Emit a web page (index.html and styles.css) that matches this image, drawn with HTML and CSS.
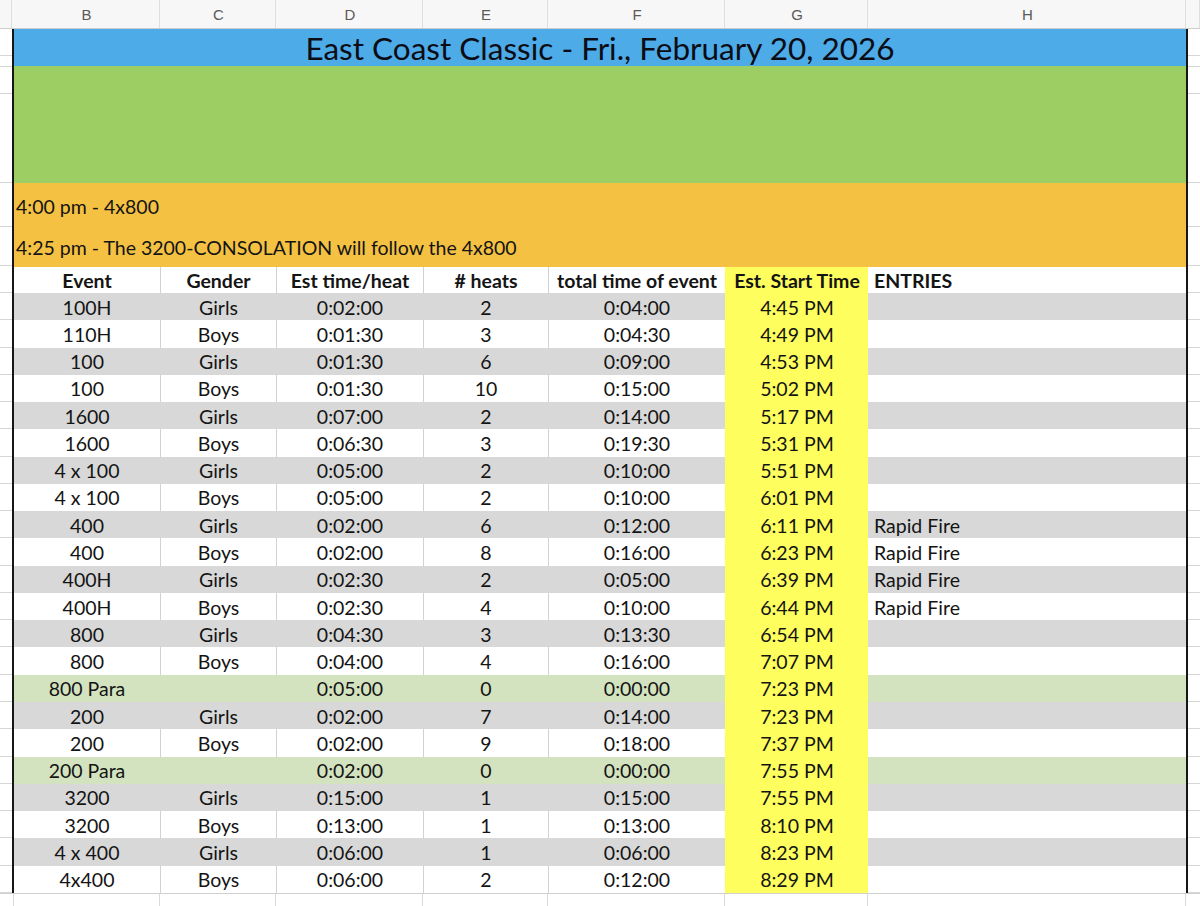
FILE: index.html
```html
<!DOCTYPE html>
<html>
<head>
<meta charset="utf-8">
<title>East Coast Classic</title>
<link rel="stylesheet" href="styles.css">
</head>
<body>
<div class="colheads">
  <div class="ch"></div>
  <div class="ch">B</div>
  <div class="ch">C</div>
  <div class="ch">D</div>
  <div class="ch">E</div>
  <div class="ch">F</div>
  <div class="ch">G</div>
  <div class="ch">H</div>
  <div class="ch"></div>
</div>
<div class="frame">
  <div class="gutter">
    <div class="h27"></div><div class="h11"></div><div class="h27"></div><div class="h89"></div>
    <div class="h44"></div><div class="h39"></div><div class="h27"></div>
    <div class="hr"></div><div class="hr"></div><div class="hr"></div><div class="hr"></div>
    <div class="hr"></div><div class="hr"></div><div class="hr"></div><div class="hr"></div>
    <div class="hr"></div><div class="hr"></div><div class="hr"></div><div class="hr"></div>
    <div class="hr"></div><div class="hr"></div><div class="hr"></div><div class="hr"></div>
    <div class="hr"></div><div class="hr"></div><div class="hr"></div><div class="hr"></div>
    <div class="hr"></div><div class="hr"></div>
  </div>
  <div class="sheet">
    <div class="title">East Coast Classic - Fri., February 20, 2026</div>
    <div class="banner"></div>
    <div class="notes">
      <div class="note n1">4:00 pm - 4x800</div>
      <div class="note n2">4:25 pm - The 3200-CONSOLATION will follow the 4x800</div>
    </div>
    <div class="row head">
      <div class="c">Event</div><div class="c">Gender</div><div class="c">Est time/heat</div><div class="c"># heats</div><div class="c">total time of event</div><div class="c y">Est. Start Time</div><div class="c l">ENTRIES</div>
    </div>
    <div class="row gray"><div class="c">100H</div><div class="c">Girls</div><div class="c">0:02:00</div><div class="c">2</div><div class="c">0:04:00</div><div class="c y">4:45 PM</div><div class="c l"></div></div>
    <div class="row"><div class="c">110H</div><div class="c">Boys</div><div class="c">0:01:30</div><div class="c">3</div><div class="c">0:04:30</div><div class="c y">4:49 PM</div><div class="c l"></div></div>
    <div class="row gray"><div class="c">100</div><div class="c">Girls</div><div class="c">0:01:30</div><div class="c">6</div><div class="c">0:09:00</div><div class="c y">4:53 PM</div><div class="c l"></div></div>
    <div class="row"><div class="c">100</div><div class="c">Boys</div><div class="c">0:01:30</div><div class="c">10</div><div class="c">0:15:00</div><div class="c y">5:02 PM</div><div class="c l"></div></div>
    <div class="row gray"><div class="c">1600</div><div class="c">Girls</div><div class="c">0:07:00</div><div class="c">2</div><div class="c">0:14:00</div><div class="c y">5:17 PM</div><div class="c l"></div></div>
    <div class="row"><div class="c">1600</div><div class="c">Boys</div><div class="c">0:06:30</div><div class="c">3</div><div class="c">0:19:30</div><div class="c y">5:31 PM</div><div class="c l"></div></div>
    <div class="row gray"><div class="c">4 x 100</div><div class="c">Girls</div><div class="c">0:05:00</div><div class="c">2</div><div class="c">0:10:00</div><div class="c y">5:51 PM</div><div class="c l"></div></div>
    <div class="row"><div class="c">4 x 100</div><div class="c">Boys</div><div class="c">0:05:00</div><div class="c">2</div><div class="c">0:10:00</div><div class="c y">6:01 PM</div><div class="c l"></div></div>
    <div class="row gray"><div class="c">400</div><div class="c">Girls</div><div class="c">0:02:00</div><div class="c">6</div><div class="c">0:12:00</div><div class="c y">6:11 PM</div><div class="c l">Rapid Fire</div></div>
    <div class="row"><div class="c">400</div><div class="c">Boys</div><div class="c">0:02:00</div><div class="c">8</div><div class="c">0:16:00</div><div class="c y">6:23 PM</div><div class="c l">Rapid Fire</div></div>
    <div class="row gray"><div class="c">400H</div><div class="c">Girls</div><div class="c">0:02:30</div><div class="c">2</div><div class="c">0:05:00</div><div class="c y">6:39 PM</div><div class="c l">Rapid Fire</div></div>
    <div class="row"><div class="c">400H</div><div class="c">Boys</div><div class="c">0:02:30</div><div class="c">4</div><div class="c">0:10:00</div><div class="c y">6:44 PM</div><div class="c l">Rapid Fire</div></div>
    <div class="row gray"><div class="c">800</div><div class="c">Girls</div><div class="c">0:04:30</div><div class="c">3</div><div class="c">0:13:30</div><div class="c y">6:54 PM</div><div class="c l"></div></div>
    <div class="row"><div class="c">800</div><div class="c">Boys</div><div class="c">0:04:00</div><div class="c">4</div><div class="c">0:16:00</div><div class="c y">7:07 PM</div><div class="c l"></div></div>
    <div class="row para"><div class="c">800 Para</div><div class="c"></div><div class="c">0:05:00</div><div class="c">0</div><div class="c">0:00:00</div><div class="c y">7:23 PM</div><div class="c l"></div></div>
    <div class="row gray"><div class="c">200</div><div class="c">Girls</div><div class="c">0:02:00</div><div class="c">7</div><div class="c">0:14:00</div><div class="c y">7:23 PM</div><div class="c l"></div></div>
    <div class="row"><div class="c">200</div><div class="c">Boys</div><div class="c">0:02:00</div><div class="c">9</div><div class="c">0:18:00</div><div class="c y">7:37 PM</div><div class="c l"></div></div>
    <div class="row para"><div class="c">200 Para</div><div class="c"></div><div class="c">0:02:00</div><div class="c">0</div><div class="c">0:00:00</div><div class="c y">7:55 PM</div><div class="c l"></div></div>
    <div class="row gray"><div class="c">3200</div><div class="c">Girls</div><div class="c">0:15:00</div><div class="c">1</div><div class="c">0:15:00</div><div class="c y">7:55 PM</div><div class="c l"></div></div>
    <div class="row"><div class="c">3200</div><div class="c">Boys</div><div class="c">0:13:00</div><div class="c">1</div><div class="c">0:13:00</div><div class="c y">8:10 PM</div><div class="c l"></div></div>
    <div class="row gray"><div class="c">4 x 400</div><div class="c">Girls</div><div class="c">0:06:00</div><div class="c">1</div><div class="c">0:06:00</div><div class="c y">8:23 PM</div><div class="c l"></div></div>
    <div class="row"><div class="c">4x400</div><div class="c">Boys</div><div class="c">0:06:00</div><div class="c">2</div><div class="c">0:12:00</div><div class="c y">8:29 PM</div><div class="c l"></div></div>
  </div>
  <div class="gutter right">
    <div class="h27"></div><div class="h11"></div><div class="h27"></div><div class="h89"></div>
    <div class="h44"></div><div class="h39"></div><div class="h27"></div>
    <div class="hr"></div><div class="hr"></div><div class="hr"></div><div class="hr"></div>
    <div class="hr"></div><div class="hr"></div><div class="hr"></div><div class="hr"></div>
    <div class="hr"></div><div class="hr"></div><div class="hr"></div><div class="hr"></div>
    <div class="hr"></div><div class="hr"></div><div class="hr"></div><div class="hr"></div>
    <div class="hr"></div><div class="hr"></div><div class="hr"></div><div class="hr"></div>
    <div class="hr"></div><div class="hr"></div>
  </div>
</div>
<div class="tail">
  <div></div><div></div><div></div><div></div><div></div><div></div><div></div><div></div><div></div>
</div>
</body>
</html>
```
FILE: styles.css
```css
* { box-sizing: border-box; }
html, body { margin: 0; padding: 0; }
body {
  width: 1200px;
  height: 906px;
  overflow: hidden;
  background: #fff;
  font-family: Lato, "Open Sans", sans-serif;
  color: #141414;
}

.colheads {
  display: grid;
  grid-template-columns: 12px 148px 116px 147px 125px 177px 143px 318px 1fr;
  height: 29px;
  background: #f7f7f7;
  border-bottom: 1px solid #cdcdcd;
}
.ch {
  display: flex;
  align-items: center;
  justify-content: center;
  border-right: 1px solid #dedede;
  font-family: "Liberation Sans", Arial, sans-serif;
  font-size: 15px;
  color: #5a5a5a;
  padding-top: 1px;
  padding-left: 2px;
}

.frame {
  display: flex;
  height: 864px;
}
.gutter {
  width: 12px;
  display: flex;
  flex-direction: column;
  background: #fff;
}
.gutter.right { flex: 1; }
.gutter > div { border-bottom: 1px solid #d6d6d6; flex: none; }
.h27 { height: 27px; }
.h11 { height: 11px; }
.h89 { height: 89px; }
.h44 { height: 44px; }
.h39 { height: 39px; }
.hr { height: 27.27px; }

.sheet {
  width: 1176px;
  border-left: 2px solid #161616;
  border-right: 2px solid #161616;
  display: flex;
  flex-direction: column;
}
.title {
  height: 37px;
  background: #4dabe8;
  text-align: center;
  font-size: 31.5px;
  line-height: 38px;
  color: #0c0c14;
  white-space: nowrap;
}
.banner {
  height: 117px;
  background: #9dce64;
}
.notes {
  height: 84px;
  background: #f5c143;
  display: flex;
  flex-direction: column;
}
.note {
  display: flex;
  align-items: center;
  padding-left: 2px;
  font-size: 19.5px;
  white-space: nowrap;
}
.n1 { height: 44px; padding-top: 3px; }
.n2 { height: 40px; }

.row {
  display: grid;
  grid-template-columns: 146px 116px 147px 125px 177px 143px 318px;
  height: 27.27px;
  background: #fff;
  font-size: 19.5px;
}
.row.head { height: 26px; font-weight: 700; font-size: 19.5px; }
.row.gray { background: #d8d8d8; }
.row.para { background: #d3e3bf; }
.c {
  display: flex;
  align-items: center;
  justify-content: center;
  white-space: nowrap;
  padding-top: 1px;
}
.row .c:not(:first-child) { border-left: 1px solid #d2d2d2; }
.row.gray .c, .row.para .c { border-left-color: transparent; }
.row .c.l { justify-content: flex-start; padding-left: 5px; }
.row .c.y { background: #fefe5e; border-left-color: transparent; }
.row .c.y + .c { border-left-color: transparent; }

.tail {
  display: grid;
  grid-template-columns: 14px 146px 116px 147px 125px 177px 143px 318px 1fr;
  height: 13px;
  border-top: 1px solid #d0d0d0;
}
.tail > div { border-right: 1px solid #dadada; }
.tail > div:last-child { border-right: none; }
```
